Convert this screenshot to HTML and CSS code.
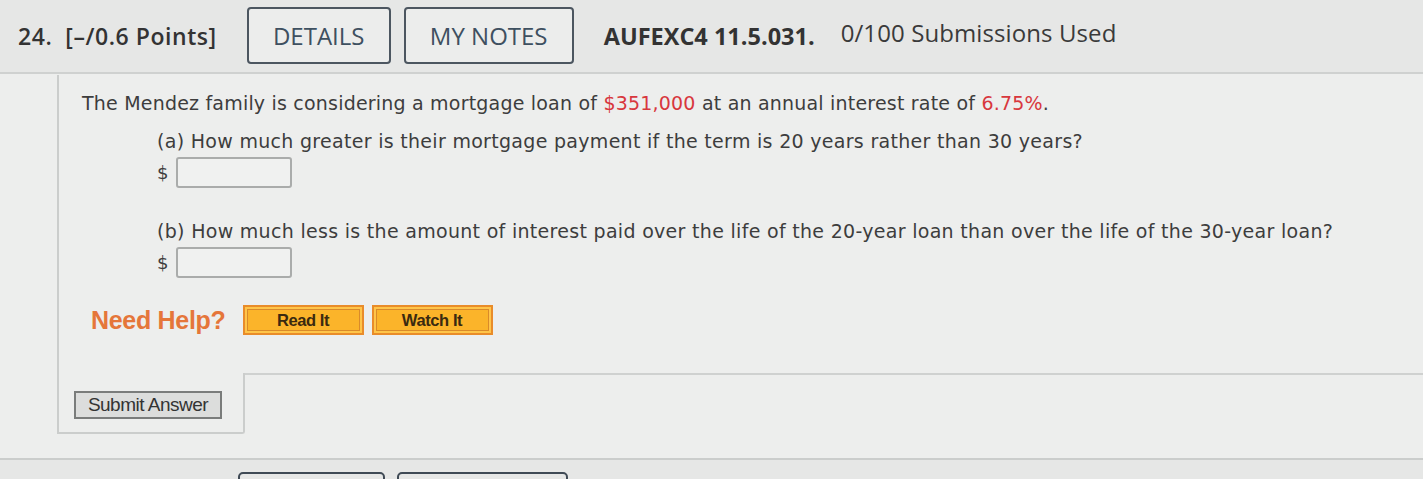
FILE: index.html
```html
<!DOCTYPE html>
<html>
<head>
<meta charset="utf-8">
<link rel="stylesheet" href="styles.css">
</head>
<body>
<div class="page">
  <header class="qhead">
    <span class="qnum">24.&nbsp; [–/0.6 Points]</span>
    <button class="hbtn details">DETAILS</button>
    <button class="hbtn notes">MY NOTES</button>
    <span class="qcode">AUFEXC4 11.5.031.</span>
    <span class="subs">0/100 Submissions Used</span>
  </header>
  <section class="qbox">
    <div class="qbody">
      <p class="stem">The Mendez family is considering a mortgage loan of <span class="red">$351,000</span> at an annual interest rate of <span class="red">6.75%</span>.</p>
      <div class="part">
        <p class="ptext">(a) How much greater is their mortgage payment if the term is 20 years rather than 30 years?</p>
        <div class="ans"><span class="dol">$</span><span class="inp"></span></div>
      </div>
      <div class="part partb">
        <p class="ptext">(b) How much less is the amount of interest paid over the life of the 20-year loan than over the life of the 30-year loan?</p>
        <div class="ans"><span class="dol">$</span><span class="inp"></span></div>
      </div>
      <div class="help">
        <span class="need">Need Help?</span>
        <button class="obtn read">Read It</button>
        <button class="obtn watch">Watch It</button>
      </div>
    </div>
    <div class="subrow">
      <div class="subtab"><button class="submit">Submit Answer</button></div>
      <div class="subrest"></div>
    </div>
  </section>
  <div class="gap"></div>
  <header class="nexthead">
    <span class="nbtn n1"></span>
    <span class="nbtn n2"></span>
  </header>
</div>
</body>
</html>
```

FILE: styles.css
```css
html, body {
  margin: 0;
  padding: 0;
}
body {
  background: #edeeed;
  width: 1423px;
  height: 479px;
  overflow: hidden;
}
.page {
  display: flex;
  flex-direction: column;
  height: 479px;
  overflow: hidden;
}
.qhead {
  height: 74px;
  flex: none;
  box-sizing: border-box;
  background: #e6e7e6;
  border-bottom: 2px solid #cfd1d0;
  display: flex;
  align-items: flex-start;
  padding-left: 18px;
  font-family: "Open Sans", sans-serif;
  color: #333;
}
.qnum {
  font-weight: 600;
  font-size: 23px;
  line-height: 31px;
  margin-top: 21px;
  margin-right: 30px;
  letter-spacing: 0.55px;
  white-space: nowrap;
}
.hbtn {
  font-family: "Open Sans", sans-serif;
  font-size: 24px;
  color: #3e5060;
  background: #ecedec;
  border: 2px solid #4c5660;
  border-radius: 4px;
  height: 57px;
  margin-top: 7px;
  padding: 0;
  flex: none;
}
.details { width: 144px; margin-right: 13px; }
.notes { width: 170px; margin-right: 30px; }
.qcode {
  font-weight: 700;
  font-size: 23.5px;
  line-height: 32px;
  margin-top: 20px;
  margin-right: 26px;
  letter-spacing: 0;
  white-space: nowrap;
}
.subs {
  font-size: 24px;
  line-height: 32px;
  margin-top: 17px;
  letter-spacing: 0.1px;
  color: #3a3a3a;
  white-space: nowrap;
}
.qbox {
  flex: none;
  margin-left: 57px;
  border-left: 2px solid #cbcdcc;
  display: flex;
  flex-direction: column;
  margin-top: 1px;
}
.qbody {
  padding: 17px 0 0 23px;
  font-family: "DejaVu Sans", Verdana, sans-serif;
  color: #3d3d3d;
  font-size: 19px;
  line-height: 22px;
}
.stem {
  margin: 0;
  letter-spacing: 0.2px;
  white-space: nowrap;
}
.red { color: #d8373d; }
.part {
  padding-left: 75px;
  margin-top: 16px;
}
.partb { margin-top: 32px; }
.ptext {
  margin: 0;
  letter-spacing: 0.3px;
  white-space: nowrap;
}
.ans {
  display: flex;
  align-items: center;
  margin-top: 5px;
}
.dol {
  width: 19px;
  font-size: 18px;
}
.inp {
  width: 112px;
  height: 27px;
  border: 2px solid #aaacab;
  border-radius: 3px;
  background: #f0f1f0;
}
.help {
  display: flex;
  align-items: center;
  height: 32px;
  margin-top: 26px;
  padding-left: 9px;
}
.need {
  font-family: "Liberation Sans", Arial, sans-serif;
  font-weight: 700;
  font-size: 25px;
  color: #e5763a;
  margin-right: 17px;
  letter-spacing: -0.3px;
}
.obtn {
  font-family: "Liberation Sans", Arial, sans-serif;
  font-weight: 700;
  font-size: 16.5px;
  color: #3a2a10;
  background: #fbb42a;
  border: 2px solid #e98c2a;
  box-shadow: inset 0 0 0 2px #ffc54a, inset 0 0 0 3px #d98a2a;
  width: 121px;
  height: 30px;
  padding: 0;
  letter-spacing: -0.4px;
}
.read { margin-right: 8px; }
.subrow {
  display: flex;
  margin-top: 37px;
}
.subtab {
  width: 186px;
  height: 61px;
  border-bottom: 2px solid #cbcdcc;
  border-right: 2px solid #cbcdcc;
  border-bottom-right-radius: 3px;
  box-sizing: border-box;
  padding: 18px 0 0 15px;
  flex: none;
}
.subrest {
  flex: 1;
  border-top: 2px solid #cfd1d0;
  height: 58px;
}
.submit {
  font-family: "Liberation Sans", Arial, sans-serif;
  font-size: 19px;
  color: #333;
  background: #dcdddc;
  border: 2px solid #7a7c7b;
  width: 148px;
  height: 28px;
  padding: 0;
  letter-spacing: -0.5px;
}
.gap { height: 24px; flex: none; }
.nexthead {
  flex: none;
  border-top: 2px solid #cbcdcc;
  background: #e6e7e6;
  height: 30px;
  display: flex;
  padding-left: 238px;
  padding-top: 12px;
}
.nbtn {
  display: block;
  height: 40px;
  border: 2px solid #3f4a55;
  border-radius: 5px;
  box-sizing: border-box;
  flex: none;
}
.n1 { width: 147px; margin-right: 12px; }
.n2 { width: 171px; }
```
